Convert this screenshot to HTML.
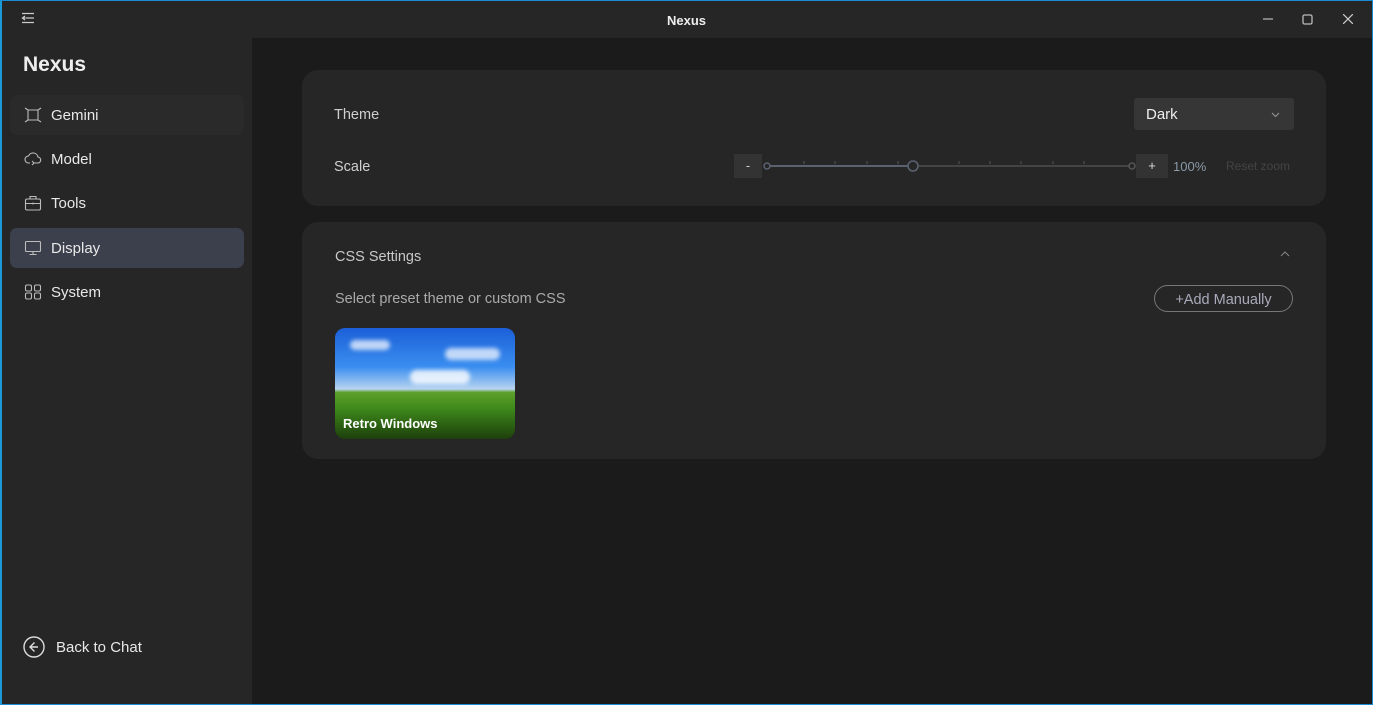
<!DOCTYPE html>
<html><head><style>
*{box-sizing:border-box;margin:0;padding:0}
body{width:1373px;height:705px;overflow:hidden;background:#1b1b1b;font-family:"Liberation Sans",sans-serif;color:#e6e6e6;position:relative}
.frame{position:absolute;inset:0;border:1px solid #1a8ad4;border-left:2px solid #1a9ad8;pointer-events:none;z-index:9}
.title{position:absolute;left:0;top:0;width:1373px;height:38px;background:#262626}
.title .t{position:absolute;left:0;right:0;top:13px;text-align:center;font-size:13px;font-weight:bold;color:#eee}
.side{position:absolute;left:0;top:38px;width:252px;height:667px;background:#262626}
.brand{position:absolute;left:23px;top:15px;font-size:21px;font-weight:bold;color:#eee}
.nav{position:absolute;left:10px;width:234px;height:40px;border-radius:7px;display:flex;align-items:center;padding-left:14px;font-size:15px;color:#e8e8e8}
.nav svg{margin-right:9px}
.card{position:absolute;left:302px;width:1024px;background:#262626;border-radius:16px}
.lbl{position:absolute;font-size:14.5px;color:#cfcfcf}
</style></head><body>
<div class="title">
<svg style="position:absolute;left:21px;top:12px" width="14" height="12" viewBox="0 0 14 12" fill="none" stroke="#ccc" stroke-width="1.3"><path d="M1 1.5h12M5 6h8M1 10.5h12M4 4L1.5 6 4 8M1.5 6h3"/></svg>
<div class="t">Nexus</div>
<svg style="position:absolute;left:1263px;top:14px" width="10" height="10" stroke="#bbb" stroke-width="1.2"><path d="M0 5h10"/></svg>
<svg style="position:absolute;left:1302px;top:14px" width="11" height="11" fill="none" stroke="#bbb" stroke-width="1.3"><rect x="1" y="1" width="9" height="9" rx="1.5"/></svg>
<svg style="position:absolute;left:1343px;top:14px" width="10" height="10" stroke="#ccc" stroke-width="1.2"><path d="M0 0L10 10M10 0L0 10"/></svg>
</div>
<div class="side">
<div class="brand">Nexus</div>
<div class="nav" style="top:57px;background:#2a2a2a"><svg width="18" height="16" viewBox="0 0 18 16" fill="none" stroke="#bbb" stroke-width="1.1"><path d="M1 1l3 2h10l3-2M1 15l3-2h10l3 2M4 3v10M14 3v10"/></svg>Gemini</div>
<div class="nav" style="top:101px"><svg width="18" height="16" viewBox="0 0 18 16" fill="none" stroke="#bbb" stroke-width="1.1"><path d="M6 12H4.5a3.5 3.5 0 010-7 5 5 0 019.5 1 3 3 0 01-.5 6H10M8 10l2 2-2 2"/></svg>Model</div>
<div class="nav" style="top:145px"><svg width="18" height="16" viewBox="0 0 18 16" fill="none" stroke="#bbb" stroke-width="1.1"><rect x="1.5" y="4" width="15" height="11" rx="1.5"/><path d="M6 4V1.5h6V4M1.5 8.5h15M9 7.5v2"/></svg>Tools</div>
<div class="nav" style="top:190px;background:#3c3f4c"><svg width="18" height="16" viewBox="0 0 18 16" fill="none" stroke="#bbb" stroke-width="1.1"><rect x="1.5" y="1.5" width="15" height="10" rx="1"/><path d="M9 11.5v3M5.5 14.5h7"/></svg>Display</div>
<div class="nav" style="top:234px"><svg width="18" height="16" viewBox="0 0 18 16" fill="none" stroke="#bbb" stroke-width="1.1"><rect x="1.5" y="1" width="6" height="6" rx="1.5"/><rect x="10.5" y="1" width="6" height="6" rx="1.5"/><rect x="1.5" y="9" width="6" height="6" rx="1.5"/><rect x="10.5" y="9" width="6" height="6" rx="1.5"/></svg>System</div>
<div style="position:absolute;left:23px;top:598px;display:flex;align-items:center;font-size:15px;color:#e8e8e8"><svg width="22" height="22" viewBox="0 0 22 22" fill="none" stroke="#ddd" stroke-width="1.4" style="margin-right:11px"><circle cx="11" cy="11" r="10"/><path d="M11.5 6.5L7 11l4.5 4.5M7 11h8"/></svg>Back to Chat</div>
</div>
<div class="card" style="top:70px;height:136px">
<div class="lbl" style="left:32px;top:37px">Theme</div>
<div style="position:absolute;left:832px;top:28px;width:160px;height:32px;background:#363636;border-radius:3px;font-size:15px;color:#eee;padding:8px 0 0 12px">Dark<svg style="position:absolute;right:14px;top:14px" width="9" height="6" fill="none" stroke="#999"><path d="M1 1l3.5 3.5L8 1"/></svg></div>
<div class="lbl" style="left:32px;top:89px">Scale</div>
<div style="position:absolute;left:432px;top:84px;width:28px;height:24px;background:#333;color:#ccc;font-size:13px;text-align:center;line-height:24px">-</div>
<svg style="position:absolute;left:460px;top:88px" width="376" height="16">
<line x1="4" y1="8" x2="150" y2="8" stroke="#5a6270" stroke-width="2"/>
<line x1="150" y1="8" x2="372" y2="8" stroke="#444" stroke-width="2"/>
<g stroke="#555"><path d="M42 3v3M73 3v3M105 3v3M136 3v3M197 3v3M228 3v3M259 3v3M291 3v3M322 3v3"/></g>
<circle cx="5" cy="8" r="3" fill="#262626" stroke="#5a6270" stroke-width="1.5"/>
<circle cx="151" cy="8" r="5" fill="#262626" stroke="#5a6270" stroke-width="1.6"/>
<circle cx="370" cy="8" r="3" fill="#262626" stroke="#555" stroke-width="1.5"/>
</svg>
<div style="position:absolute;left:834px;top:84px;width:32px;height:24px;background:#333;color:#ddd;font-size:13px;text-align:center;line-height:24px">+</div>
<div style="position:absolute;left:871px;top:89px;font-size:13px;color:#8a98a8">100%</div>
<div style="position:absolute;left:924px;top:89px;font-size:12px;color:#444">Reset zoom</div>
</div>
<div class="card" style="top:222px;height:237px">
<div class="lbl" style="left:33px;top:27px;color:#c8c8c8">CSS Settings</div>
<svg style="position:absolute;left:978px;top:29px" width="10" height="6" fill="none" stroke="#888"><path d="M1 5l4-4 4 4"/></svg>
<div class="lbl" style="left:33px;top:69px;color:#aaa">Select preset theme or custom CSS</div>
<div style="position:absolute;left:852px;top:63px;width:139px;height:27px;border:1px solid #777;border-radius:14px;color:#aab;font-size:14.5px;text-align:center;line-height:26px;padding-top:1px">+Add Manually</div>
<div style="position:absolute;left:33px;top:106px;width:180px;height:111px;border-radius:10px;overflow:hidden;background:linear-gradient(180deg,#1b5fd8 0%,#3a8ef0 35%,#b8d4f0 55%,#5ea02a 58%,#3f8a1c 72%,#2b5f12 88%,#1d3f0c 100%)">
<div style="position:absolute;left:15px;top:12px;width:40px;height:10px;background:#fff;opacity:.7;border-radius:6px;filter:blur(2px)"></div>
<div style="position:absolute;left:110px;top:20px;width:55px;height:12px;background:#fff;opacity:.7;border-radius:6px;filter:blur(2px)"></div>
<div style="position:absolute;left:75px;top:42px;width:60px;height:14px;background:#fff;opacity:.8;border-radius:7px;filter:blur(2px)"></div>
<div style="position:absolute;left:8px;top:88px;color:#fff;font-size:13px;font-weight:bold">Retro Windows</div>
</div>
</div>
<div class="frame"></div>
</body></html>
